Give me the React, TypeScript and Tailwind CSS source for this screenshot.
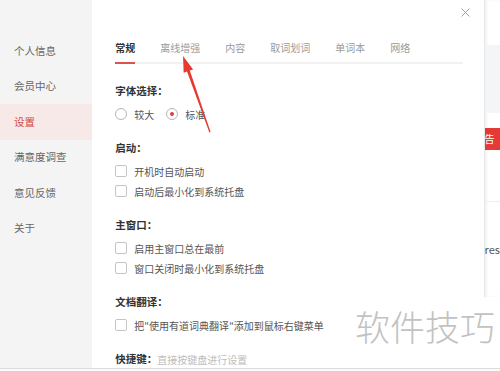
import React from 'react';

const font = { fontFamily: '"Noto Sans CJK SC", "Noto Sans", sans-serif' };

const navItems = ['个人信息', '会员中心', '设置', '满意度调查', '意见反馈', '关于'];
const tabs = ['常规', '离线增强', '内容', '取词划词', '单词本', '网络'];

const Checkbox = ({ label }: { label: string }) => (
  <div className="flex items-center h-[20px]">
    <span className="w-[12px] h-[12px] rounded-[2px] border border-[#c4c4c4] bg-white" />
    <span className="ml-[7px] text-[10px] text-[#555]">{label}</span>
  </div>
);

const Radio = ({ label, checked }: { label: string; checked?: boolean }) => (
  <div className="flex items-center">
    <span className="w-[12px] h-[12px] rounded-full border border-[#b5b5b5] flex items-center justify-center bg-white">
      {checked && <span className="w-[4px] h-[4px] rounded-full bg-[#d9423b]" />}
    </span>
    <span className="ml-[7px] text-[10px] text-[#555]">{label}</span>
  </div>
);

const Heading = ({ children }: { children: React.ReactNode }) => (
  <div className="h-[16px] leading-[16px] text-[10.5px] font-bold text-[#333]">{children}</div>
);

const App = () => {
  return (
    <div className="relative w-[500px] h-[371px] overflow-hidden bg-white" style={font}>
      <div className="flex h-[368px]">
        {/* sidebar */}
        <div className="w-[93px] bg-[#f4f4f4] pt-[33px]">
          {navItems.map((item) => (
            <div
              key={item}
              className={`h-[35.5px] flex items-center pl-[14px] text-[10.5px] ${
                item === '设置' ? 'bg-[#f8e9e9] text-[#d1473f]' : 'text-[#666]'
              }`}
            >
              {item}
            </div>
          ))}
        </div>

        {/* main */}
        <div className="relative w-[394px] pl-[23px] pr-[21px]">
          <button className="absolute left-[369px] top-[8px] w-[9px] h-[9px]">
            <svg viewBox="0 0 9 9" className="w-[9px] h-[9px]">
              <path d="M0.5 0.5 L8.5 8.5 M8.5 0.5 L0.5 8.5" stroke="#999" strokeWidth="0.9" fill="none" />
            </svg>
          </button>

          <div className="mt-[40px] flex gap-[25px] border-b-2 border-[#f2f2f2]">
            {tabs.map((tab, i) => (
              <div
                key={tab}
                className={`-mb-[2px] pb-[6px] leading-[16px] text-[10px] ${
                  i === 0 ? 'font-bold text-[#333] border-b-2 border-[#d9534f]' : 'text-[#9a9a9a] border-b-2 border-transparent'
                }`}
              >
                {tab}
              </div>
            ))}
          </div>

          <div className="mt-[19px]">
            <Heading>字体选择：</Heading>
            <div className="mt-[5px] h-[20px] flex items-center gap-[12px]">
              <Radio label="较大" />
              <Radio label="标准" checked />
            </div>
          </div>

          <div className="mt-[16px]">
            <Heading>启动：</Heading>
            <div className="mt-[5px]">
              <Checkbox label="开机时自动启动" />
              <Checkbox label="启动后最小化到系统托盘" />
            </div>
          </div>

          <div className="mt-[16px]">
            <Heading>主窗口：</Heading>
            <div className="mt-[5px]">
              <Checkbox label="启用主窗口总在最前" />
              <Checkbox label="窗口关闭时最小化到系统托盘" />
            </div>
          </div>

          <div className="mt-[16px]">
            <Heading>文档翻译：</Heading>
            <div className="mt-[5px]">
              <Checkbox label={'把"使用有道词典翻译"添加到鼠标右键菜单'} />
            </div>
          </div>

          <div className="mt-[16px] flex items-center h-[16px]">
            <span className="text-[10.5px] font-bold text-[#333]">快捷键：</span>
            <span className="text-[10px] text-[#bdbdbd]">直接按键盘进行设置</span>
          </div>
        </div>

        {/* background window strip */}
        <div className="flex-1 flex flex-col">
          <div className="h-[297px] flex flex-col border-l border-[#e6e6e6] shadow-[inset_2px_0_3px_rgba(0,0,0,0.05)]">
            <div className="h-[45px]" />
            <div className="h-[68px] bg-[#f4f5f7]" />
            <div className="h-[15px]" />
            <div className="h-[22px] bg-[#e53935] text-white text-[10px] leading-[22px] overflow-hidden">告</div>
            <div className="h-[52px] border-b border-[#eeeeee]" />
            <div className="h-[40px]" />
            <div className="text-[11px] text-[#555] leading-[14px] whitespace-nowrap">res</div>
          </div>
        </div>
      </div>
      <div className="h-[3px] border-t border-[#dcdcdc] bg-[#fafafa]" />

      {/* red annotation arrow */}
      <svg className="absolute left-0 top-0 pointer-events-none" width="500" height="371">
        <polygon
          points="183,56 193.1,69.4 189.8,70.6 210.6,132 209.4,132.4 187,71.6 183.7,72.8"
          fill="#e8392f"
        />
      </svg>

      {/* watermark */}
      <div className="absolute left-[355px] top-[304px] text-[35px] leading-[44px] font-light text-[#c2c2c2] whitespace-nowrap pointer-events-none">
        软件技巧
      </div>
    </div>
  );
};

export default App;
